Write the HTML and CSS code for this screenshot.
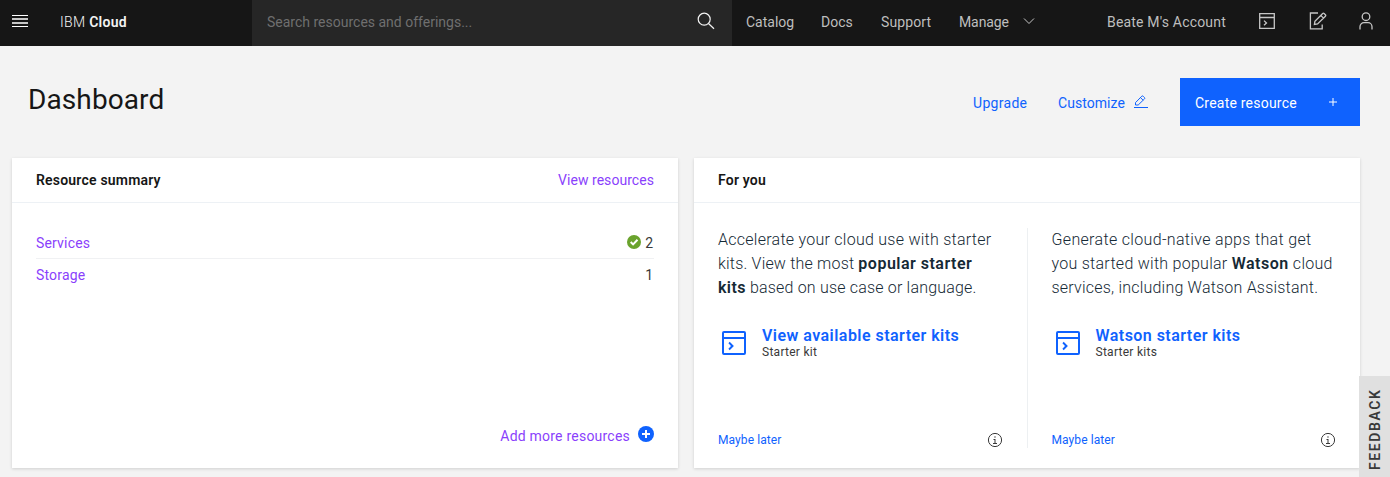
FILE: index.html
```html
<!DOCTYPE html>
<html lang="en">
<head>
<meta charset="utf-8">
<title>Dashboard - IBM Cloud</title>
<link rel="stylesheet" href="styles.css">
</head>
<body>
<svg class="defs" width="0" height="0" aria-hidden="true">
  <symbol id="starter" viewBox="0 0 24 24">
    <path d="M22 0H2a2 2 0 0 0-2 2v20a2 2 0 0 0 2 2h20a2 2 0 0 0 2-2V2a2 2 0 0 0-2-2zm0 2v4H2V2zM2 22V8h20v14z"/>
    <path d="M7.7 10.8 6.4 12.2 9 15l-2.6 2.8 1.3 1.4 4.2-4.2z"/>
  </symbol>
  <symbol id="info" viewBox="0 0 16 16">
    <circle cx="8" cy="8" r="6.6" fill="none" stroke="currentColor" stroke-width="1"/>
    <path d="M6.5 7h2v4H10v.9H6V11h1.5V7.9h-1zM8 4.3a.7.7 0 1 1 0 1.4.7.7 0 0 1 0-1.4z"/>
  </symbol>
</svg>
<header class="topbar">
  <svg class="menu" viewBox="0 0 16 12"><path d="M0 .5h16M0 11.5h16"/><path class="soft" d="M0 4h16M0 8h16"/></svg>
  <div class="brand"><span class="t-ibm">IBM</span> <b>Cloud</b></div>
  <div class="search">
    <span class="t-search">Search resources and offerings...</span>
    <svg class="search-icon" viewBox="0 0 18 18"><circle cx="7.2" cy="7.2" r="6"/><path d="m11.5 11.5 5.5 5.2"/></svg>
  </div>
  <nav class="nav">
    <a class="t-catalog">Catalog</a><a class="t-docs">Docs</a><a class="t-support">Support</a><a class="t-manage">Manage</a>
    <svg class="chevron" viewBox="0 0 12 8"><path d="m1 1.5 5 5 5-5"/></svg>
  </nav>
  <div class="account">
    <span class="t-account">Beate M's Account</span>
    <svg class="ic ic-starter" viewBox="0 0 16 16"><path d="M.7.7h14.6v14.6H.7zM.7 4.5h14.6M5 7.6 7.5 10 5 12.3"/></svg>
    <svg class="ic ic-edit" viewBox="0 0 18 18"><path d="M9 1H1.4v15.9h11.8v-4.4M5.4 12.5l.5-3.2 7.8-7.8a1 1 0 0 1 1.4 0l1.3 1.3a1 1 0 0 1 0 1.4l-7.8 7.8zM11.8 3.4l2.7 2.7"/></svg>
    <svg class="ic ic-user" viewBox="0 0 14 18"><circle cx="7" cy="4.7" r="3.8"/><path d="M1 17.5v-2.8a4 4 0 0 1 4-4h4a4 4 0 0 1 4 4v2.8"/></svg>
  </div>
</header>
<main>
  <section class="heading">
    <h1>Dashboard</h1>
    <a class="upgrade">Upgrade</a>
    <a class="customize"><span>Customize</span><svg viewBox="0 0 14 14"><path d="M0 12.5h14M1.5 10V7.6l6.3-6.4a.9.9 0 0 1 1.3 0l1.4 1.4a.9.9 0 0 1 0 1.3L4.2 10zM6.5 2.6l2.6 2.6"/></svg></a>
    <button class="create"><span>Create resource</span><svg viewBox="0 0 8 8"><path d="M4 0v8M0 4h8"/></svg></button>
  </section>
  <section class="cards">
    <article class="card">
      <header class="card-head"><h2 class="t-summary">Resource summary</h2><a class="t-view">View resources</a></header>
      <div class="summary">
        <div class="row"><a class="t-services">Services</a><span class="count"><svg viewBox="0 0 14 14"><circle cx="7" cy="7" r="7"/><path d="m3.7 7 2.4 2.4 4.4-4.6"/></svg>2</span></div>
        <div class="row"><a class="t-storage">Storage</a><span class="count">1</span></div>
      </div>
      <footer class="add"><a>Add more resources</a><svg viewBox="0 0 16 16"><circle cx="8" cy="8" r="8"/><path d="M8 4v8M4 8h8"/></svg></footer>
    </article>
    <article class="card">
      <header class="card-head"><h2 class="t-foryou">For you</h2></header>
      <div class="offers">
        <div class="offer">
          <p><span class="p1">Accelerate your cloud use with starter</span><br><span class="p2">kits. View the most <b>popular starter</b></span><br><span class="p3"><b>kits</b> based on use case or language.</span></p>
          <div class="kit"><svg><use href="#starter"/></svg><div><a class="k1">View available starter kits</a><small>Starter kit</small></div></div>
          <div class="later"><a>Maybe later</a><svg><use href="#info"/></svg></div>
        </div>
        <div class="offer">
          <p><span class="p4">Generate cloud-native apps that get</span><br><span class="p5">you started with popular <b>Watson</b> cloud</span><br><span class="p6">services, including Watson Assistant.</span></p>
          <div class="kit"><svg><use href="#starter"/></svg><div><a class="k2">Watson starter kits</a><small>Starter kits</small></div></div>
          <div class="later"><a>Maybe later</a><svg><use href="#info"/></svg></div>
        </div>
      </div>
    </article>
  </section>
</main>
<aside class="feedback"><span>FEEDBACK</span></aside>
</body>
</html>
```
FILE: styles.css
```css
* { box-sizing: border-box; }
html, body { height: 100%; }
body {
  margin: 0;
  overflow: hidden;
  background: #f3f3f3;
  color: #161616;
  font: 14px/18px Roboto, "Liberation Sans", sans-serif;
  white-space: nowrap;
}
h1, h2, p { margin: 0; }
svg { display: block; flex: none; }
.defs { position: absolute; }
.topbar { display: flex; align-items: center; height: 46px; padding-bottom: 2px; background: #161616; color: #bebebe; }
.menu { width: 16px; height: 12px; margin: 0 32px 2px 12px; stroke: #fff; }
.menu .soft { stroke: #c6c6c6; stroke-width: 2; }
.brand { width: 192px; color: #f3f3f3; letter-spacing: .3px; }
.brand b { font-weight: 600; }
.t-ibm { font-weight: 300; }
.search { display: flex; align-items: center; justify-content: space-between; align-self: flex-start; flex: none; width: 480px; height: 46px; padding: 0 17px 2px 15px; background: #262626; color: #6f6f6f; }
.search-icon { width: 18px; height: 18px; margin-bottom: 3px; fill: none; stroke: #f3f3f3; stroke-width: 1.2; }
.nav { display: flex; align-items: center; width: 375px; padding-left: 14px; }
.t-catalog { width: 75px; }
.t-docs { width: 60px; }
.t-support { width: 78px; letter-spacing: .1px; }
.t-manage { width: 64px; letter-spacing: -.1px; }
.chevron { width: 12px; height: 8px; margin-bottom: 2px; fill: none; stroke: #c6c6c6; }
.account { display: flex; align-items: center; }
.t-account { width: 152px; letter-spacing: .18px; }
.ic { fill: none; stroke: #c6c6c6; stroke-width: 1.3; }
.ic-starter { width: 16px; height: 16px; margin: 0 34px 2px 0; }
.ic-edit { width: 18px; height: 18px; margin: 0 32px 2px 0; }
.ic-user { width: 14px; height: 18px; margin-bottom: 2px; }
.heading { display: flex; height: 112px; padding: 32px 30px 0 28px; color: #0f62fe; }
h1 { width: 945px; color: #161616; font-size: 28px; font-weight: 400; line-height: 44px; letter-spacing: .1px; }
.upgrade { width: 85px; line-height: 50px; letter-spacing: .3px; }
.customize { display: flex; width: 122px; line-height: 50px; }
.customize span { width: 76px; letter-spacing: .05px; }
.customize svg { width: 14px; height: 14px; margin-top: 17px; fill: none; stroke: #0f62fe; }
.create { display: flex; align-items: center; justify-content: space-between; width: 180px; height: 48px; padding: 2px 23px 0 15px; border: 0; background: #0f62fe; color: #fff; font: inherit; letter-spacing: .22px; }
.create svg { width: 8px; height: 8px; margin-bottom: 3px; stroke: #fff; }
.cards { display: grid; grid-template-columns: 666px 666px; gap: 16px; padding-left: 12px; }
.card { display: flex; flex-direction: column; height: 310px; background: #fff; box-shadow: 0 1px 3px rgba(0, 0, 0, .15); }
.card-head { display: flex; justify-content: space-between; align-items: center; flex: none; height: 45px; padding: 0 24px; border-bottom: 1px solid #edf1f5; }
h2 { font-size: 14px; line-height: 18px; font-weight: 600; letter-spacing: .2px; }
.t-view, .row a, .add a { color: #8a3ffc; }
.t-view { letter-spacing: .05px; }
.row a { letter-spacing: .17px; }
.add a { letter-spacing: .22px; }
.summary { padding: 24px 24px 0; }
.row { display: flex; justify-content: space-between; align-items: center; height: 32px; }
.row:first-child { border-bottom: 1px solid #f0f1f3; }
.count { display: flex; align-items: center; gap: 4px; padding-right: 1px; color: #393939; }
.count svg { width: 14px; height: 14px; margin-bottom: 2px; fill: #6aa32d; }
.count path { fill: none; stroke: #fff; stroke-width: 2; }
.add { display: flex; align-items: center; justify-content: flex-end; gap: 8px; margin-top: auto; padding: 0 24px 23px; }
.add svg { width: 16px; height: 16px; margin-bottom: 3px; fill: #0f62fe; }
.add path { stroke: #fff; stroke-width: 2; }
.offers { display: grid; grid-template-columns: 334px 332px; flex: 1; padding: 25px 0 20px; }
.offer { display: flex; flex-direction: column; padding-left: 24px; }
.offer + .offer { padding-left: 23.5px; }
.offer:first-child { border-right: 1px solid #edf0f2; }
.offer p { color: #152935; font-size: 16px; font-weight: 300; line-height: 24px; }
.offer p b { font-weight: 600; }
.p1 { letter-spacing: .26px; }
.p2 { letter-spacing: .19px; }
.p2 b { letter-spacing: .49px; }
.p3 { letter-spacing: .19px; }
.p3 b { letter-spacing: .4px; }
.p4 { letter-spacing: .33px; }
.p5 { letter-spacing: .27px; }
.p5 b { letter-spacing: .5px; }
.p6 { letter-spacing: .21px; }
.kit { display: flex; gap: 14px; margin-top: 26px; }
.kit svg { width: 24px; height: 24px; margin: 5px 0 0 4px; fill: #0f62fe; }
.kit a { display: block; color: #0f62fe; font-size: 16px; font-weight: 600; line-height: 20px; letter-spacing: .46px; }
.kit div { margin-left: 2px; }
.kit small { display: block; margin-top: -1px; color: #393939; font-size: 12px; line-height: 14px; letter-spacing: .27px; }
.later { display: flex; align-items: center; justify-content: space-between; margin-top: auto; padding-right: 24px; color: #0f62fe; font-size: 12px; line-height: 16px; letter-spacing: .08px; }
.later svg { width: 16px; height: 16px; color: #393939; fill: #393939; }
.feedback { position: absolute; right: 0; bottom: 0; display: flex; align-items: center; justify-content: flex-start; width: 31px; height: 101px; padding: 7px 0 0 2px; background: #e0e0e0; color: #393939; font-weight: 600; letter-spacing: 1.6px; writing-mode: vertical-rl; transform: rotate(180deg); }
.feedback span { margin-left: -3px; }
```
